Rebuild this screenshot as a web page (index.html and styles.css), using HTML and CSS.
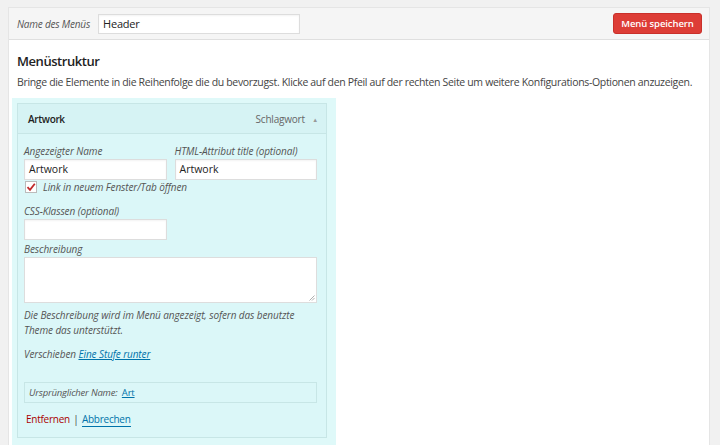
FILE: index.html
```html
<!DOCTYPE html>
<html lang="de">
<head>
<meta charset="utf-8">
<link rel="stylesheet" href="styles.css">
</head>
<body>
<div class="panel">
  <div class="topbar">
    <label class="menu-name-label">Name des Menüs</label>
    <div class="input menu-name">Header</div>
    <div class="spacer"></div>
    <button class="save">Menü speichern</button>
  </div>
  <div class="content">
    <h3 class="title">Menüstruktur</h3>
    <p class="intro">Bringe die Elemente in die Reihenfolge die du bevorzugst. Klicke auf den Pfeil auf der rechten Seite um weitere Konfigurations-Optionen anzuzeigen.</p>
    <div class="item-wrap">
      <div class="item">
        <div class="item-head">
          <span class="item-title">Artwork</span>
          <span class="item-type">Schlagwort <span class="arrow">▲</span></span>
        </div>
        <div class="item-body">
          <div class="row">
            <div class="field">
              <div class="lbl">Angezeigter Name</div>
              <div class="input">Artwork</div>
            </div>
            <div class="field">
              <div class="lbl">HTML-Attribut title (optional)</div>
              <div class="input">Artwork</div>
            </div>
          </div>
          <div class="check-row">
            <span class="checkbox"><svg width="10" height="10" viewBox="0 0 10 10"><path d="M1.5 5.2 L4 7.8 L8.8 1.8" fill="none" stroke="#c0292a" stroke-width="1.8"/></svg></span>
            <span class="lbl">Link in neuem Fenster/Tab öffnen</span>
          </div>
          <div class="field css">
            <div class="lbl">CSS-Klassen (optional)</div>
            <div class="input"></div>
          </div>
          <div class="field desc">
            <div class="lbl">Beschreibung</div>
            <div class="textarea"><svg class="grip" width="6" height="6" viewBox="0 0 6 6"><path d="M5.5 0.5 L0.5 5.5 M5.5 3 L3 5.5" stroke="#999" stroke-width="0.8"/></svg></div>
          </div>
          <p class="lbl note">Die Beschreibung wird im Menü angezeigt, sofern das benutzte Theme das unterstützt.</p>
          <p class="lbl move">Verschieben <a class="link">Eine Stufe runter</a></p>
          <div class="original"><span class="lbl">Ursprünglicher Name:</span> <a class="link">Art</a></div>
          <div class="actions"><a class="remove">Entfernen</a> <span class="sep">|</span> <a class="link cancel">Abbrechen</a></div>
        </div>
      </div>
    </div>
  </div>
</div>
</body>
</html>
```
FILE: styles.css
```css
* { box-sizing: border-box; }
html, body { margin: 0; padding: 0; }
body {
  background: #f1f1f1;
  font-family: "Open Sans", "Liberation Sans", sans-serif;
  color: #444;
  font-size: 11px;
  width: 720px;
  height: 445px;
  overflow: hidden;
}
.panel {
  margin: 7px 10px 0 8px;
  border: 1px solid #e5e5e5;
  border-bottom: none;
  background: #fff;
  height: 438px;
}
.topbar {
  display: flex;
  align-items: center;
  height: 32px;
  background: #f5f5f5;
  border-bottom: 1px solid #dfdfdf;
  padding: 0 7px 0 8px;
}
.menu-name-label {
  font-style: italic;
  font-size: 10px;
  letter-spacing: -0.2px;
  color: #555;
  width: 81px;
  white-space: nowrap;
}
.input {
  height: 21px;
  border: 1px solid #ddd;
  background: #fff;
  font-size: 11px;
  letter-spacing: -0.2px;
  color: #222;
  line-height: 19px;
  padding: 0 4px;
  box-shadow: inset 0 1px 2px rgba(0,0,0,0.05);
}
.menu-name { width: 202px; padding-left: 4px; height: 20px; line-height: 18px; }
.spacer { flex: 1; }
.save {
  background: #dd3d36;
  border: 1px solid #c9302a;
  border-radius: 3px;
  color: #fff;
  font-family: inherit;
  font-weight: 600;
  font-size: 9.5px;
  letter-spacing: -0.1px;
  height: 21px;
  width: 89px;
  padding: 0;
  line-height: 18px;
  white-space: nowrap;
}
.content { padding: 0 0 0 8px; }
.title {
  margin: 0;
  padding-top: 11px;
  font-size: 13px;
  font-weight: 600;
  letter-spacing: -0.45px;
  color: #222;
  line-height: 20px;
}
.intro {
  margin: 2px 0 0;
  font-size: 10.5px;
  letter-spacing: -0.33px;
  line-height: 18px;
  color: #444;
  white-space: nowrap;
}
.item-wrap {
  margin: 7px 0 0 -5px;
  width: 324px;
  background: #dff9f9;
  padding: 5px 9px 7px 5px;
  height: 360px;
}
.item {
  border: 1px solid #c7e6e6;
  background: #dbf7f8;
}
.item-head {
  display: flex;
  align-items: center;
  justify-content: space-between;
  height: 30px;
  background: #d6f3f4;
  border-bottom: 1px solid #c7e6e6;
  padding: 0 8px 0 10px;
}
.item-title { font-weight: 600; font-size: 10px; letter-spacing: -0.35px; color: #222; }
.item-type { font-size: 10px; letter-spacing: -0.2px; color: #666; }
.arrow { font-size: 6px; color: #999; margin-left: 5px; vertical-align: 1px; }
.item-body { padding: 10px 9px 10px 6px; }
.row { display: flex; gap: 8px; }
.row .field { width: 143px; }
.lbl {
  font-style: italic;
  font-size: 10px;
  letter-spacing: -0.1px;
  color: #555;
  line-height: 14px;
}
.field .lbl { margin-bottom: 1px; }
.field .input { height: 21px; font-size: 10.5px; letter-spacing: 0; }
.check-row { display: flex; align-items: center; margin-top: 0; height: 14px; }
.checkbox {
  width: 12px; height: 12px;
  border: 1px solid #bbb;
  background: #fff;
  margin: 0 6px 0 1px;
  display: flex; align-items: center; justify-content: center;
}
.css { margin-top: 10px; width: 143px; }
.desc { margin-top: 2px; }
.textarea {
  height: 46px;
  width: 293px;
  border: 1px solid #ddd;
  background: #fff;
  position: relative;
}
.grip { position: absolute; right: 1px; bottom: 1px; }
.note { margin: 5px 0 0; line-height: 15px; width: 293px; }
.move { margin: 9px 0 0; }
.link { color: #0073aa; text-decoration: underline; }
.original {
  margin-top: 21px;
  width: 293px;
  height: 21px;
  border: 1px solid #c7e6e6;
  padding: 0 4px;
  line-height: 19px;
  font-size: 9.5px;
}
.original .lbl { font-size: 9.5px; letter-spacing: -0.2px; }
.original .link { font-size: 9.5px; margin-left: 2px; letter-spacing: -0.2px; }
.actions { margin-top: 8px; font-size: 10px; letter-spacing: -0.25px; line-height: 16px; padding-left: 2px; }
.remove { color: #a00; }
.sep { color: #444; margin: 0 1px; }
.cancel { text-decoration: none; border-bottom: 1px solid #0073aa; }
```
